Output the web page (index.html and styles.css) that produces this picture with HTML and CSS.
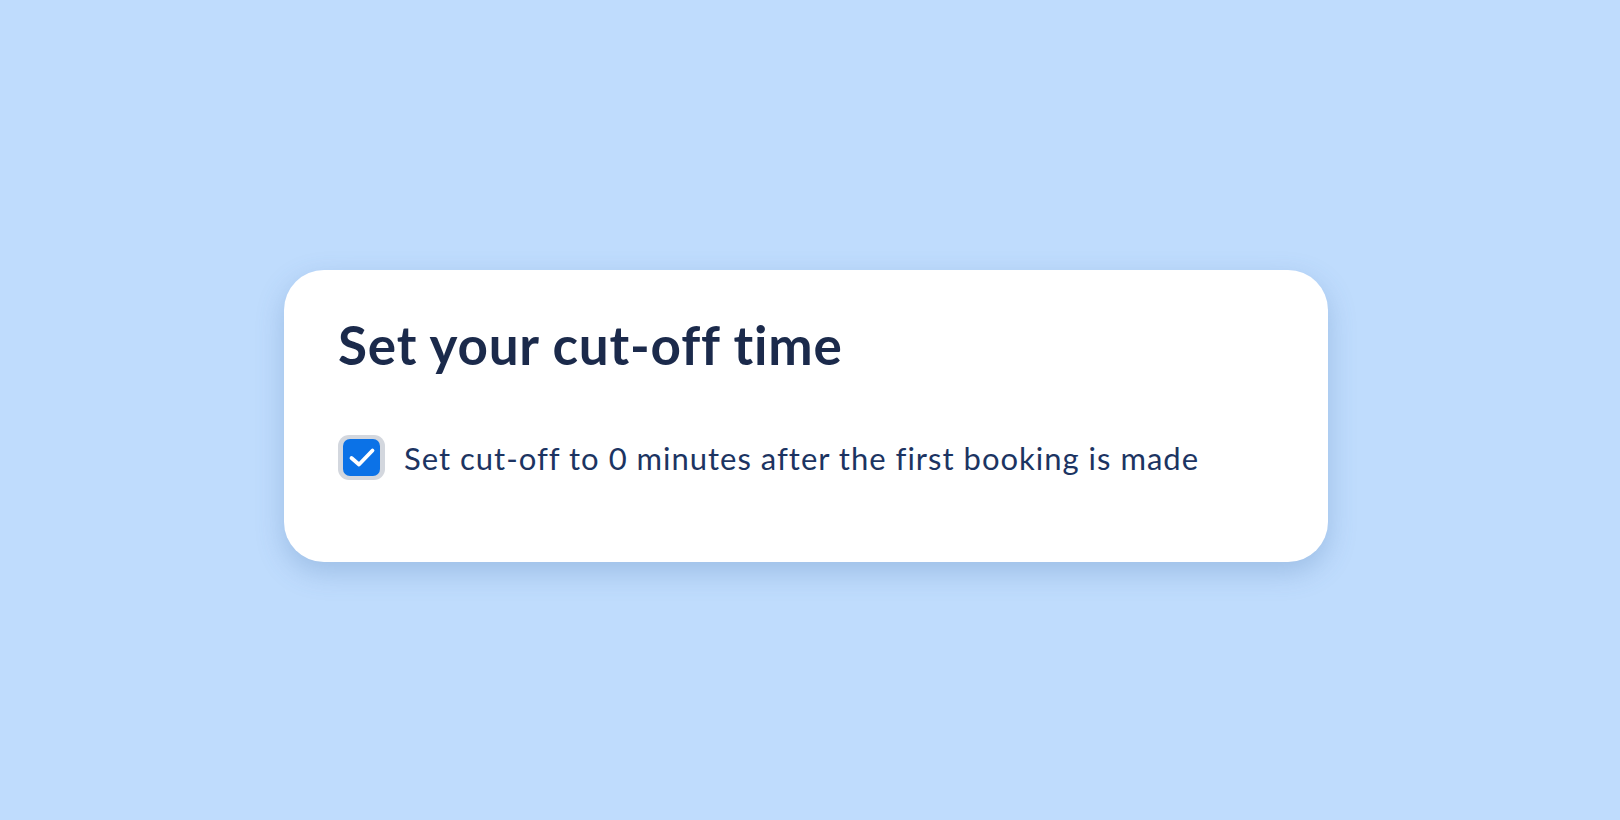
FILE: index.html
```html
<!DOCTYPE html>
<html lang="en">
<head>
<meta charset="utf-8">
<title>Set your cut-off time</title>
<link rel="stylesheet" href="styles.css">
</head>
<body>
<main class="stage">
  <section class="card">
    <h1 class="card-title">Set your cut-off time</h1>
    <label class="option">
      <span class="checkbox">
        <span class="checkbox-inner">
          <svg class="check" viewBox="0 0 37 37" width="37" height="37" aria-hidden="true">
            <polyline points="8.5,19 16,25.5 29.5,11.5" fill="none" stroke="#ffffff" stroke-width="3.8" stroke-linecap="round" stroke-linejoin="round"/>
          </svg>
        </span>
      </span>
      <span class="option-text">Set cut-off to 0 minutes after the first booking is made</span>
    </label>
  </section>
</main>
</body>
</html>
```
FILE: styles.css
```css
* { box-sizing: border-box; }
html, body { margin: 0; padding: 0; }
body {
  background: #bfdcfd;
  font-family: Lato, "Noto Sans", "Liberation Sans", sans-serif;
  font-variant-ligatures: none;
}
.stage {
  min-height: 820px;
  display: flex;
  align-items: center;
  justify-content: center;
  padding: 12px 8px 0 0;
}
.card {
  width: 1044px;
  background: #ffffff;
  border-radius: 40px;
  padding: 45px 54px 82px;
  box-shadow: 0 10px 28px rgba(70, 110, 170, 0.28);
}
.card-title {
  margin: 0 0 60px;
  font-size: 53px;
  line-height: 60px;
  font-weight: 700;
  color: #1b2a4b;
  letter-spacing: 0.8px;
}
.option {
  display: flex;
  align-items: center;
  gap: 19px;
}
.checkbox {
  width: 47px;
  height: 45px;
  border-radius: 11px;
  background: #d3d7de;
  display: flex;
  align-items: center;
  justify-content: center;
  flex: none;
}
.checkbox-inner {
  width: 37px;
  height: 37px;
  border-radius: 7px;
  background: #0b72e7;
  display: flex;
}
.option-text {
  font-size: 31px;
  line-height: 36px;
  color: #1c3462;
  letter-spacing: 1px;
}
```
